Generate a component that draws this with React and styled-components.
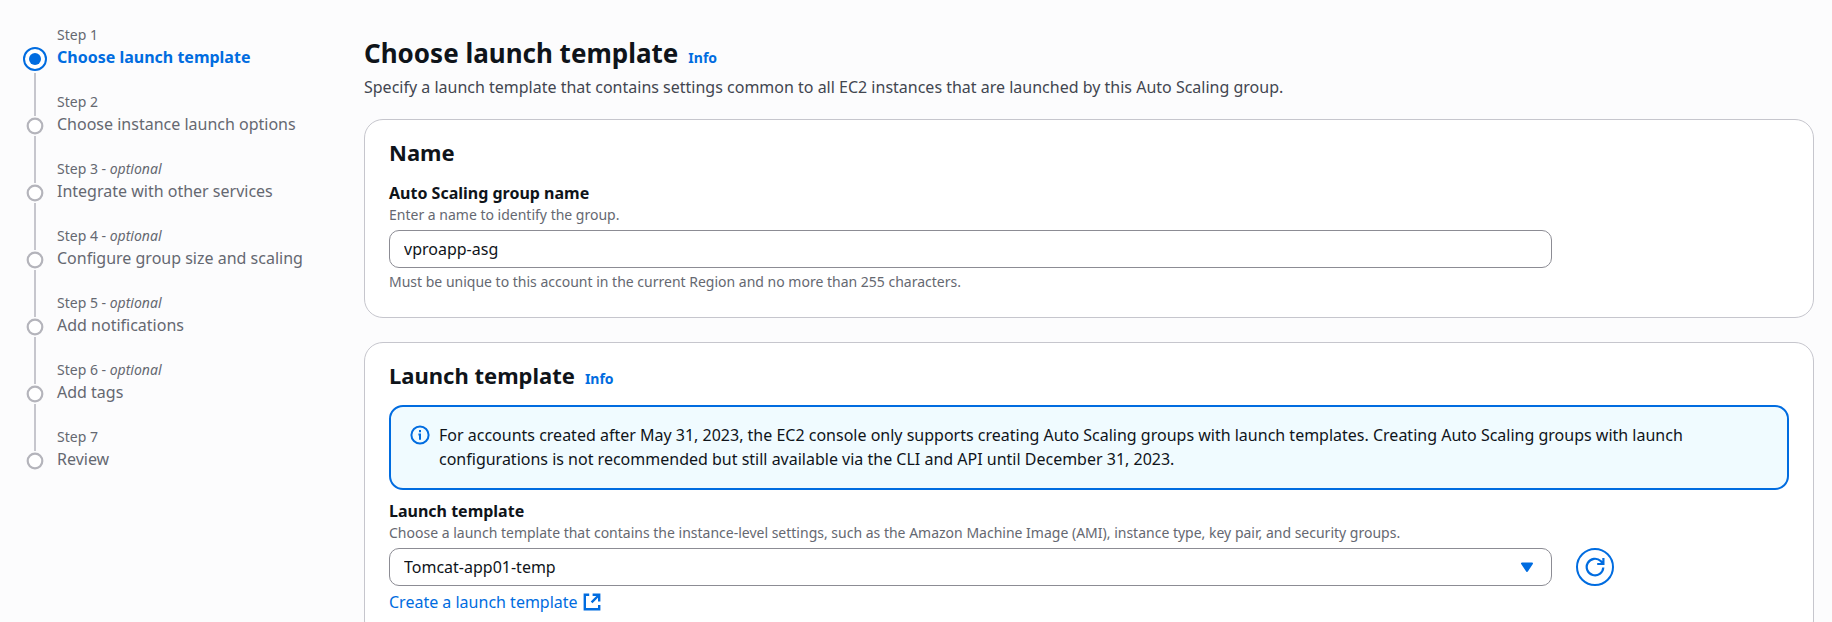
import React, { useState } from "react";
import styled, { createGlobalStyle, css } from "styled-components";

const color = {
  page: "#fcfcfd",
  surface: "#ffffff",
  text: "#0f141a",
  secondary: "#424650",
  muted: "#656871",
  accent: "#006ce0",
  infoSurface: "#f0fbff",
  cardBorder: "#c6c6cd",
  fieldBorder: "#8c8c94",
  stepRing: "#b4b4bb",
};

const GlobalStyle = createGlobalStyle`
  *, *::before, *::after { box-sizing: border-box; }
  body {
    margin: 0;
    background: ${color.page};
    color: ${color.text};
    font-family: "Noto Sans", "Open Sans", sans-serif;
    font-size: 16px;
    line-height: 24px;
  }
`;

const Page = styled.div`
  display: grid;
  grid-template-columns: 316px minmax(0, 1fr);
  column-gap: 24px;
  padding: 24px 18px 0 24px;
`;

const StepList = styled.ol`
  list-style: none;
  margin: 0;
  padding: 0;
`;

const StepItem = styled.li`
  display: grid;
  grid-template-columns: 22px minmax(0, 1fr);
  column-gap: 11px;
  min-height: 67px;
`;

const StepRail = styled.div`
  display: flex;
  flex-direction: column;
  align-items: center;
`;

const Line = styled.span`
  width: 2px;
  background: ${(p) => (p.$hidden ? "transparent" : color.cardBorder)};
  ${(p) => (p.$lead ? css`height: ${p.$lead}px;` : css`flex: 1;`)}
`;

const Marker = styled.svg`
  display: block;
  flex: none;
`;

const StepText = styled.div`
  display: flex;
  flex-direction: column;
`;

const StepNumber = styled.span`
  color: ${color.muted};
  font-size: 14px;
  line-height: 21px;
`;

const StepLink = styled.a`
  color: ${(p) => (p.$active ? color.accent : color.muted)};
  font-weight: ${(p) => (p.$active ? 700 : 400)};
  text-decoration: none;
`;

const Main = styled.main`
  display: flex;
  flex-direction: column;
  gap: 20px;
  padding-top: 13px;
`;

const CardStack = styled.div`
  display: flex;
  flex-direction: column;
  gap: 24px;
`;

const PageHeader = styled.header`
  display: flex;
  flex-direction: column;
  gap: 6px;
`;

const TitleRow = styled.div`
  display: flex;
  align-items: baseline;
  gap: 10px;
`;

const PageTitle = styled.h1`
  margin: 0;
  font-size: 26px;
  line-height: 32px;
  font-weight: 700;
`;

const SectionTitle = styled.h2`
  margin: 0;
  font-size: 22px;
  line-height: 28px;
  font-weight: 700;
`;

const InfoLink = styled.a`
  color: ${color.accent};
  font-size: 14px;
  line-height: 20px;
  font-weight: 700;
  text-decoration: none;
`;

const Lead = styled.p`
  margin: 0;
  color: ${color.secondary};
`;

const Card = styled.section`
  display: flex;
  flex-direction: column;
  gap: 16px;
  padding: 18px 24px 25px;
  border: 1px solid ${color.cardBorder};
  border-radius: 19px;
  background: ${color.surface};
`;

const CardBody = styled.div`
  display: flex;
  flex-direction: column;
  gap: 10px;
`;

const Field = styled.div`
  display: flex;
  flex-direction: column;
  gap: 1px;
`;

const Label = styled.label`
  font-weight: 700;
  line-height: 22px;
`;

const Hint = styled.span`
  color: ${color.muted};
  font-size: 14px;
  line-height: 20px;
`;

const FieldGrid = styled.div`
  display: grid;
  grid-template-columns: repeat(12, minmax(0, 1fr));
  column-gap: 24px;
  margin: 4px 0 3px;
`;

const controlStyle = css`
  width: 100%;
  height: 38px;
  padding: 0 14px;
  border: 1px solid ${color.fieldBorder};
  border-radius: 10px;
  background: ${color.surface};
  color: ${color.text};
  font: inherit;
`;

const TextInput = styled.input`
  ${controlStyle}
  grid-column: span 10;
`;

const SelectBox = styled.div`
  position: relative;
  grid-column: span 10;
`;

const Select = styled.select`
  ${controlStyle}
  display: block;
  appearance: none;
`;

const Caret = styled.svg`
  position: absolute;
  top: 14px;
  right: 18px;
  width: 14px;
  height: 11px;
  pointer-events: none;
`;

const RefreshButton = styled.button`
  display: flex;
  align-items: center;
  justify-content: center;
  width: 38px;
  height: 38px;
  padding: 0;
  border: 2px solid ${color.accent};
  border-radius: 50%;
  background: ${color.surface};
`;

const Alert = styled.div`
  display: flex;
  gap: 9px;
  padding: 16px 19px 17px;
  border: 2px solid ${color.accent};
  border-radius: 14px;
  background: ${color.infoSurface};

  svg {
    flex: none;
    margin-top: 2px;
  }
`;

const AlertText = styled.p`
  margin: 0;
  max-width: 1290px;
`;

const ExternalLink = styled.a`
  display: inline-flex;
  align-items: center;
  align-self: flex-start;
  gap: 5px;
  color: ${color.accent};
  text-decoration: none;
`;

const steps = [
  { title: "Choose launch template" },
  { title: "Choose instance launch options" },
  { title: "Integrate with other services", optional: true },
  { title: "Configure group size and scaling", optional: true },
  { title: "Add notifications", optional: true },
  { title: "Add tags", optional: true },
  { title: "Review" },
];

function StepMarker({ active }) {
  return active ? (
    <Marker width="28" height="28" viewBox="0 0 28 28" aria-hidden="true">
      <circle cx="14" cy="14" r="11" fill="#fff" stroke={color.accent} strokeWidth="2" />
      <circle cx="14" cy="14" r="6" fill={color.accent} />
    </Marker>
  ) : (
    <Marker width="20" height="20" viewBox="0 0 20 20" aria-hidden="true">
      <circle cx="10" cy="10" r="7.3" fill="#fff" stroke={color.stepRing} strokeWidth="2.2" />
    </Marker>
  );
}

function Step({ index, title, optional }) {
  const active = index === 0;
  return (
    <StepItem>
      <StepRail>
        <Line $lead={active ? 21 : 25} $hidden={active} />
        <StepMarker active={active} />
        <Line $hidden={index === steps.length - 1} />
      </StepRail>
      <StepText>
        <StepNumber>
          Step {index + 1}
          {optional && (
            <>
              {" - "}
              <em>optional</em>
            </>
          )}
        </StepNumber>
        <StepLink href="#" $active={active} aria-current={active ? "step" : undefined}>
          {title}
        </StepLink>
      </StepText>
    </StepItem>
  );
}

function InfoIcon() {
  return (
    <svg width="20" height="20" viewBox="0 0 20 20" aria-hidden="true">
      <circle cx="10" cy="10" r="8.6" fill="none" stroke={color.accent} strokeWidth="2" />
      <path d="M10 5v2.2M8.4 9.4H10v5.4" fill="none" stroke={color.accent} strokeWidth="2" />
    </svg>
  );
}

function ExternalIcon() {
  return (
    <svg width="18" height="18" viewBox="0 0 18 18" aria-hidden="true">
      <path
        d="M6.2 1.8H1.8v14.4H16.2V12M9.6 1.8h6.6v6.6M16 2L8.6 9.4"
        fill="none"
        stroke={color.accent}
        strokeWidth="2.4"
      />
    </svg>
  );
}

function RefreshIcon() {
  return (
    <svg width="20" height="20" viewBox="0 0 20 20" aria-hidden="true">
      <path
        d="M18.3 10.5a8.3 8.3 0 1 1-2.6-6.5L18 6.6M18.4 1v6h-6.2"
        fill="none"
        stroke={color.accent}
        strokeWidth="2.2"
      />
    </svg>
  );
}

export default function App() {
  const [name, setName] = useState("vproapp-asg");
  return (
    <>
      <GlobalStyle />
      <Page>
        <nav aria-label="Steps">
          <StepList>
            {steps.map((step, i) => (
              <Step key={step.title} index={i} {...step} />
            ))}
          </StepList>
        </nav>
        <Main>
          <PageHeader>
            <TitleRow>
              <PageTitle>Choose launch template</PageTitle>
              <InfoLink href="#">Info</InfoLink>
            </TitleRow>
            <Lead>
              Specify a launch template that contains settings common to all EC2 instances that are
              launched by this Auto Scaling group.
            </Lead>
          </PageHeader>
          <CardStack>
            <Card>
              <SectionTitle>Name</SectionTitle>
              <Field>
                <Label htmlFor="group-name">Auto Scaling group name</Label>
                <Hint>Enter a name to identify the group.</Hint>
                <FieldGrid>
                  <TextInput
                    id="group-name"
                    type="text"
                    value={name}
                    onChange={(e) => setName(e.target.value)}
                  />
                </FieldGrid>
                <Hint>
                  Must be unique to this account in the current Region and no more than 255
                  characters.
                </Hint>
              </Field>
            </Card>
            <Card>
              <TitleRow>
                <SectionTitle>Launch template</SectionTitle>
                <InfoLink href="#">Info</InfoLink>
              </TitleRow>
              <CardBody>
                <Alert role="note">
                  <InfoIcon />
                  <AlertText>
                    For accounts created after May 31, 2023, the EC2 console only supports creating
                    Auto Scaling groups with launch templates. Creating Auto Scaling groups with
                    launch configurations is not recommended but still available via the CLI and
                    API until December 31, 2023.
                  </AlertText>
                </Alert>
                <Field>
                  <Label htmlFor="launch-template">Launch template</Label>
                  <Hint>
                    Choose a launch template that contains the instance-level settings, such as the
                    Amazon Machine Image (AMI), instance type, key pair, and security groups.
                  </Hint>
                  <FieldGrid>
                    <SelectBox>
                      <Select id="launch-template" defaultValue="Tomcat-app01-temp">
                        <option>Tomcat-app01-temp</option>
                      </Select>
                      <Caret viewBox="0 0 14 11" aria-hidden="true">
                        <path
                          d="M2 1.5h10L7 9z"
                          fill={color.accent}
                          stroke={color.accent}
                          strokeWidth="2"
                          strokeLinejoin="round"
                        />
                      </Caret>
                    </SelectBox>
                    <RefreshButton type="button" aria-label="Refresh launch templates">
                      <RefreshIcon />
                    </RefreshButton>
                  </FieldGrid>
                  <ExternalLink href="#">
                    Create a launch template
                    <ExternalIcon />
                  </ExternalLink>
                </Field>
              </CardBody>
            </Card>
          </CardStack>
        </Main>
      </Page>
    </>
  );
}
